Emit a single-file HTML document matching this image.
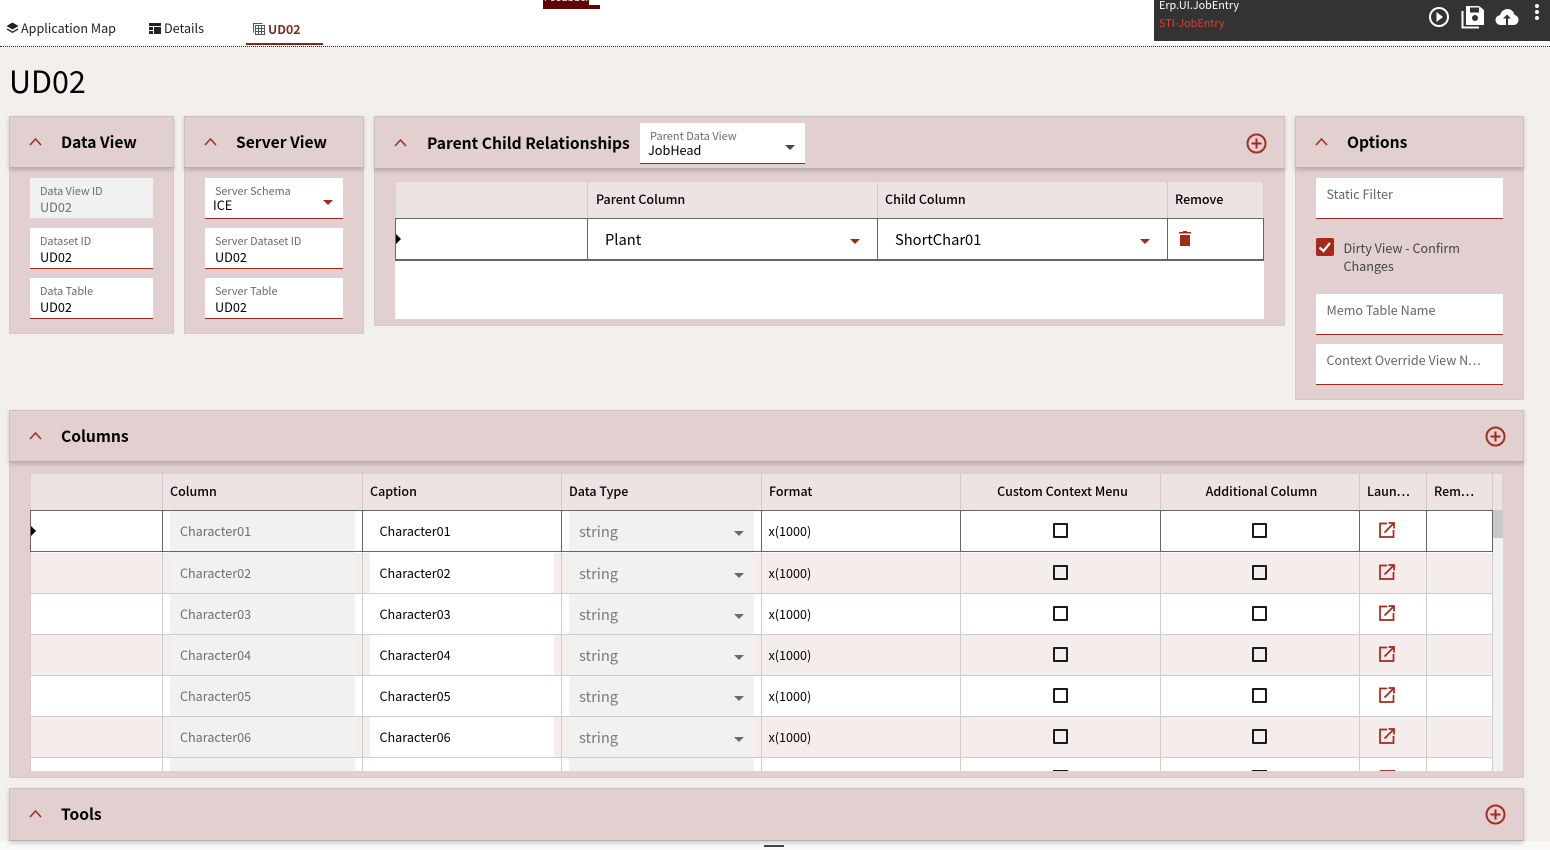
<!DOCTYPE html>
<html><head><meta charset="utf-8"><title>UD02</title>
<style>
html,body{margin:0;padding:0;width:1550px;height:850px;overflow:hidden;background:#f3efed}
body{position:relative;font-family:"Noto Sans CJK JP","Liberation Sans",sans-serif;color:#000}
div,svg{position:absolute;box-sizing:border-box}
.t{white-space:nowrap;line-height:20px;height:20px}
.p{background:#e2d0d0;border:1px solid #ccc}
.h{background:#e2d0d0;border:1px solid #c9c2c2;border-bottom:1px solid #b9adad;box-shadow:0 2px 4px rgba(0,0,0,.18)}
.ht{font-size:15.6px;font-weight:700;color:#000}
.f{background:#fff;border-bottom:1px solid #a5281b;height:41px}
.fd{background:#f1f1f1;height:40px}
.l{font-size:10.8px;color:#6b6b6b}
.v{font-size:12.7px;color:#000}
.th{font-size:12.5px;font-weight:500;color:#000}
.cap{font-size:12.6px}
.g{color:#6f6f6f}
.vl{width:1px;background:#cfcccc}
.hl{height:1px;background:#cfcccc}
.d{width:1px;background:#666}
.cb{width:15px;height:15px;border:2px solid #1a1a1a;border-radius:1px}
.tri{width:0;height:0;border-left:5px solid transparent;border-right:5px solid transparent;border-top:5px solid #6a6a6a}
.trr{width:0;height:0;border-left:5px solid transparent;border-right:5px solid transparent;border-top:5px solid #a5281b}
.str{font-size:14.7px;color:#7a7a7a}
.dots{letter-spacing:1px}
</style></head><body>

<!-- top bar -->
<div style="left:0;top:0;width:1550px;height:45px;background:#fff"></div>
<div style="left:0;top:46px;width:1550px;height:0;border-top:1px dotted #333"></div>
<svg style="left:6px;top:22px" width="13" height="12" viewBox="0 0 13 12"><path d="M6.500 0.500L12.500 4L6.500 7.500L0.500 4Z" fill="#222"/><path d="M1.500 6.500L6.500 9.500L11.500 6.500L12.500 7.500L6.500 11L0.500 7.500Z" fill="#222"/></svg>
<div class="t" style="left:21px;top:17.500px;font-size:12.600px;color:#222">Application Map</div>
<svg style="left:149px;top:23px" width="12" height="11" viewBox="0 0 12 11"><path d="M0 0H12V3H0ZM0 4H4V7H0ZM0 8H4V11H0ZM5 4H12V11H5Z" fill="#222"/></svg>
<div class="t" style="left:164px;top:17.500px;font-size:12.600px;color:#222">Details</div>
<svg style="left:253px;top:23px" width="12" height="12" viewBox="0 0 12 12" fill="none" stroke="#555"><path d="M.5 9.500V.5H9.500M2.500 2.500H11.500V11.500H2.500ZM2.500 5.500H11.500M2.500 8.500H11.500M5.500 2.500V11.500M8.500 2.500V11.500"/></svg>
<div class="t" style="left:268px;top:18.500px;font-size:12.300px;font-weight:700;color:#7c2b22">UD02</div>
<div style="left:246px;top:43px;width:77px;height:2px;background:#7c2b22"></div>

<div style="left:543px;top:0;width:57px;height:9px;background:#5f0505;overflow:hidden">
<div class="t" style="left:1px;top:-12px;font-size:10.500px;color:#fff">Feedback</div>
<div style="left:46px;top:0;width:11px;height:5px;background:#fff"></div></div>

<div style="left:1154px;top:0;width:396px;height:41px;background:#333"></div>
<div class="t" style="left:1159px;top:-5px;font-size:10.800px;color:#fff">Erp.UI.JobEntry</div>
<div class="t" style="left:1159px;top:13px;font-size:10.800px;color:#e23c2c">STI-JobEntry</div>
<svg style="left:1428px;top:6px" width="22" height="22" viewBox="0 0 22 22"><circle cx="11" cy="11" r="9" fill="none" stroke="#fff" stroke-width="2"/><path d="M8.500 6L15 11L8.500 16Z" fill="#fff"/></svg>
<svg style="left:1461px;top:5px" width="24" height="24" viewBox="0 0 24 24"><path d="M1.500 6V22.500H18" fill="none" stroke="#fff" stroke-width="2"/><path d="M5 1H18L23 5V20H5Z" fill="#fff"/><rect x="9" y="2.500" width="9" height="5" fill="#333"/><circle cx="14" cy="13" r="3" fill="#333"/></svg>
<svg style="left:1495px;top:6px" width="24" height="20" viewBox="0 0 24 20"><path d="M6 19C2.500 19 .5 16.500 .5 14C.5 11.500 2.500 9.500 5 9.300C6 5.500 9 3 12.500 3C16 3 19 5.500 19.500 9C22 9.300 23.500 11.500 23.500 14C23.500 16.500 21.500 19 18.500 19Z" fill="#fff"/><path d="M12 8.500L16 12.500H13V19H11V12.500H8Z" fill="#333"/></svg>
<div style="left:1534.500px;top:4px;width:4px;height:4px;border-radius:50%;background:#fff"></div>
<div style="left:1534.500px;top:10px;width:4px;height:4px;border-radius:50%;background:#fff"></div>
<div style="left:1534.500px;top:16px;width:4px;height:4px;border-radius:50%;background:#fff"></div>

<div class="t" style="left:9px;top:70px;font-size:30.500px;height:20px">UD02</div>

<!-- Data View -->
<div class="p" style="left:9px;top:116px;width:165px;height:218px"></div>
<div class="h" style="left:9px;top:116px;width:165px;height:52px"></div>
<svg style="left:28.500px;top:137px" width="13" height="9" viewBox="0 0 13 9"><path d="M1 8L6.500 2L12 8" fill="none" stroke="#a03020" stroke-width="1.600"/></svg>
<div class="t ht" style="left:61px;top:132px">Data View</div>
<div class="fd" style="left:30px;top:178px;width:123px"></div>
<div class="t l" style="left:40px;top:181px">Data View ID</div>
<div class="t v g" style="left:40px;top:197px">UD02</div>
<div class="f" style="left:30px;top:228px;width:123px"></div>
<div class="t l" style="left:40px;top:231px">Dataset ID</div>
<div class="t v" style="left:40px;top:247px">UD02</div>
<div class="f" style="left:30px;top:278px;width:123px"></div>
<div class="t l" style="left:40px;top:281px">Data Table</div>
<div class="t v" style="left:40px;top:297px">UD02</div>

<!-- Server View -->
<div class="p" style="left:184px;top:116px;width:180px;height:218px"></div>
<div class="h" style="left:184px;top:116px;width:180px;height:52px"></div>
<svg style="left:203.500px;top:137px" width="13" height="9" viewBox="0 0 13 9"><path d="M1 8L6.500 2L12 8" fill="none" stroke="#a03020" stroke-width="1.600"/></svg>
<div class="t ht" style="left:236px;top:132px">Server View</div>
<div class="f" style="left:205px;top:178px;width:138px"></div>
<div class="t l" style="left:215px;top:181px">Server Schema</div>
<div class="t v" style="left:213px;top:195px">ICE</div>
<div class="trr" style="left:323px;top:200px"></div>
<div class="f" style="left:205px;top:228px;width:138px"></div>
<div class="t l" style="left:215px;top:231px">Server Dataset ID</div>
<div class="t v" style="left:215px;top:247px">UD02</div>
<div class="f" style="left:205px;top:278px;width:138px"></div>
<div class="t l" style="left:215px;top:281px">Server Table</div>
<div class="t v" style="left:215px;top:297px">UD02</div>

<!-- Parent Child -->
<div class="p" style="left:374px;top:116px;width:911px;height:210px"></div>
<div class="h" style="left:374px;top:116px;width:911px;height:53px"></div>
<svg style="left:393.500px;top:138px" width="13" height="9" viewBox="0 0 13 9"><path d="M1 8L6.500 2L12 8" fill="none" stroke="#a03020" stroke-width="1.600"/></svg>
<div class="t ht" style="left:427px;top:133px">Parent Child Relationships</div>
<div class="f" style="left:640px;top:123px;width:165px"></div>
<div class="t l" style="left:650px;top:126px;font-size:11px">Parent Data View</div>
<div class="t v" style="left:648px;top:140px">JobHead</div>
<div class="tri" style="left:785px;top:145px;border-top-color:#444"></div>
<svg style="left:1245.500px;top:133px" width="21" height="21" viewBox="0 0 21 21"><circle cx="10.500" cy="10.500" r="9" fill="none" stroke="#a03020" stroke-width="2"/><path d="M10.500 5.500V15.500M5.500 10.500H15.500" stroke="#a5281b" stroke-width="2"/></svg>

<div style="left:395px;top:181px;width:869px;height:138px;background:#fff"></div>
<div style="left:395px;top:181px;width:869px;height:37px;background:#ede3e3;border:1px solid #d6d0d0;border-bottom:0"></div>
<div class="vl" style="left:587px;top:181px;height:37px"></div>
<div class="vl" style="left:877px;top:181px;height:37px"></div>
<div class="vl" style="left:1167px;top:181px;height:37px"></div>
<div class="t th" style="left:596px;top:189px">Parent Column</div>
<div class="t th" style="left:885px;top:189px">Child Column</div>
<div class="t th" style="left:1175px;top:189px">Remove</div>
<div style="left:395px;top:218px;width:869px;height:43px;border:1px solid #666;border-bottom:2px solid #666"></div>
<div class="d" style="left:587px;top:218px;height:43px"></div>
<div class="d" style="left:877px;top:218px;height:43px"></div>
<div class="d" style="left:1167px;top:218px;height:43px"></div>
<div style="left:396px;top:234px;width:0;height:0;border-top:5px solid transparent;border-bottom:5px solid transparent;border-left:5px solid #000"></div>
<div class="t" style="left:605px;top:230px;font-size:14.700px">Plant</div>
<div class="t" style="left:895px;top:230px;font-size:14.700px">ShortChar01</div>
<div class="trr" style="left:850px;top:239px"></div>
<div class="trr" style="left:1140px;top:239px"></div>
<svg style="left:1179px;top:231px" width="12" height="15" viewBox="0 0 12 15"><path d="M4 0H8V1H12V2.500H0V1H4Z" fill="#a5281b"/><path d="M1 4H11V15H1Z" fill="#a5281b"/></svg>

<!-- Options -->
<div class="p" style="left:1295px;top:116px;width:229px;height:284px"></div>
<div class="h" style="left:1295px;top:116px;width:229px;height:52px"></div>
<svg style="left:1314.500px;top:137px" width="13" height="9" viewBox="0 0 13 9"><path d="M1 8L6.500 2L12 8" fill="none" stroke="#a03020" stroke-width="1.600"/></svg>
<div class="t ht" style="left:1347px;top:132px">Options</div>
<div class="f" style="left:1316px;top:178px;width:187px"></div>
<div class="t" style="left:1326.500px;top:184px;font-size:12.600px;color:#666">Static Filter</div>
<svg style="left:1316px;top:238px" width="18" height="18" viewBox="0 0 18 18"><rect width="18" height="18" rx="2" fill="#a5281b"/><path d="M3.500 9.500L7.500 13L14 5" fill="none" stroke="#fff" stroke-width="2.200"/></svg>
<div class="t" style="left:1343.500px;top:238px;font-size:12.600px;color:#444">Dirty View - Confirm</div>
<div class="t" style="left:1343.500px;top:256px;font-size:12.600px;color:#444">Changes</div>
<div class="f" style="left:1316px;top:294px;width:187px"></div>
<div class="t" style="left:1326.500px;top:300px;font-size:12.600px;color:#666">Memo Table Name</div>
<div class="f" style="left:1316px;top:344px;width:187px"></div>
<div class="t" style="left:1326.500px;top:350px;font-size:12.600px;color:#666">Context Override View N<span class="dots">...</span></div>

<!-- Columns -->
<div class="p" style="left:9px;top:410px;width:1515px;height:368px"></div>
<div class="h" style="left:9px;top:410px;width:1515px;height:52px"></div>
<svg style="left:28.500px;top:431px" width="13" height="9" viewBox="0 0 13 9"><path d="M1 8L6.500 2L12 8" fill="none" stroke="#a03020" stroke-width="1.600"/></svg>
<div class="t ht" style="left:61px;top:426px">Columns</div>
<svg style="left:1484.500px;top:425.500px" width="21" height="21" viewBox="0 0 21 21"><circle cx="10.500" cy="10.500" r="9" fill="none" stroke="#a03020" stroke-width="2"/><path d="M10.500 5.500V15.500M5.500 10.500H15.500" stroke="#a5281b" stroke-width="2"/></svg>

<div style="left:30px;top:473px;width:1473px;height:298px;background:#fff;overflow:hidden"></div>
<div style="left:30px;top:473px;width:1473px;height:37px;background:#ede3e3;border:1px solid #d6d0d0;border-bottom:0"></div>
<div style="left:1493px;top:510px;width:10px;height:261px;background:#f1f1f1"></div>
<div style="left:1493px;top:510px;width:10px;height:28px;background:#c8c8c8"></div>
<!-- pink rows -->
<div style="left:31px;top:553px;width:1462px;height:40px;background:#f5ecec"></div>
<div style="left:31px;top:635px;width:1462px;height:40px;background:#f5ecec"></div>
<div style="left:31px;top:717px;width:1462px;height:40px;background:#f5ecec"></div>
<!-- column fills -->
<div style="left:170px;top:510px;width:185px;height:261px;background:#f1f1f1"></div>
<div style="left:569px;top:510px;width:185px;height:261px;background:#f1f1f1"></div>
<div style="left:370px;top:553px;width:184px;height:40px;background:#fff"></div>
<div style="left:370px;top:635px;width:184px;height:40px;background:#fff"></div>
<div style="left:370px;top:717px;width:184px;height:40px;background:#fff"></div>
<!-- grid -->
<div class="hl" style="left:31px;top:593px;width:1462px"></div>
<div class="hl" style="left:31px;top:634px;width:1462px"></div>
<div class="hl" style="left:31px;top:675px;width:1462px"></div>
<div class="hl" style="left:31px;top:716px;width:1462px"></div>
<div class="hl" style="left:31px;top:757px;width:1462px"></div>
<div class="vl" style="left:30px;top:510px;height:261px"></div>
<div class="vl" style="left:162px;top:473px;height:298px"></div>
<div class="vl" style="left:362px;top:473px;height:298px"></div>
<div class="vl" style="left:561px;top:473px;height:298px"></div>
<div class="vl" style="left:761px;top:473px;height:298px"></div>
<div class="vl" style="left:960px;top:473px;height:298px"></div>
<div class="vl" style="left:1160px;top:473px;height:298px"></div>
<div class="vl" style="left:1359px;top:473px;height:298px"></div>
<div class="vl" style="left:1426px;top:473px;height:298px"></div>
<div class="vl" style="left:1492px;top:473px;height:298px"></div>
<!-- selected row -->
<div style="left:30px;top:510px;width:1463px;height:42px;border:1px solid #666"></div>
<div class="d" style="left:162px;top:510px;height:42px"></div>
<div class="d" style="left:362px;top:510px;height:42px"></div>
<div class="d" style="left:561px;top:510px;height:42px"></div>
<div class="d" style="left:761px;top:510px;height:42px"></div>
<div class="d" style="left:960px;top:510px;height:42px"></div>
<div class="d" style="left:1160px;top:510px;height:42px"></div>
<div class="d" style="left:1359px;top:510px;height:42px"></div>
<div class="d" style="left:1426px;top:510px;height:42px"></div>
<div style="left:31px;top:526px;width:0;height:0;border-top:5px solid transparent;border-bottom:5px solid transparent;border-left:5px solid #000"></div>
<!-- header text -->
<div class="t th" style="left:170px;top:481px">Column</div>
<div class="t th" style="left:370px;top:481px">Caption</div>
<div class="t th" style="left:569px;top:481px">Data Type</div>
<div class="t th" style="left:769px;top:481px">Format</div>
<div class="t th" style="left:963px;top:481px;width:199px;text-align:center">Custom Context Menu</div>
<div class="t th" style="left:1162px;top:481px;width:199px;text-align:center">Additional Column</div>
<div class="t th" style="left:1367px;top:481px">Laun<span class="dots">...</span></div>
<div class="t th" style="left:1434px;top:481px">Rem<span class="dots">...</span></div>

<!-- rows text -->
<div class="t cap g" style="left:180px;top:521px">Character01</div><div class="t cap" style="left:379.500px;top:521px">Character01</div><div class="t str" style="left:579px;top:522px">string</div><div class="tri" style="left:734px;top:531px"></div><div class="t cap" style="left:768.500px;top:521px">x(1000)</div><div class="cb" style="left:1053px;top:523px"></div><div class="cb" style="left:1252px;top:523px"></div>
<svg style="left:1379px;top:522px" width="16" height="16" viewBox="0 0 16 16" fill="none" stroke="#a5281b" stroke-width="1.700"><path d="M8 1.500H1V15H14.500V8M5.500 10.500L14 2M9.500 1H15V6.500"/></svg>

<div class="t cap g" style="left:180px;top:563px">Character02</div><div class="t cap" style="left:379.500px;top:563px">Character02</div><div class="t str" style="left:579px;top:564px">string</div><div class="tri" style="left:734px;top:573px"></div><div class="t cap" style="left:768.500px;top:563px">x(1000)</div><div class="cb" style="left:1053px;top:565px"></div><div class="cb" style="left:1252px;top:565px"></div>
<svg style="left:1379px;top:564px" width="16" height="16" viewBox="0 0 16 16" fill="none" stroke="#a5281b" stroke-width="1.700"><path d="M8 1.500H1V15H14.500V8M5.500 10.500L14 2M9.500 1H15V6.500"/></svg>

<div class="t cap g" style="left:180px;top:604px">Character03</div><div class="t cap" style="left:379.500px;top:604px">Character03</div><div class="t str" style="left:579px;top:605px">string</div><div class="tri" style="left:734px;top:614px"></div><div class="t cap" style="left:768.500px;top:604px">x(1000)</div><div class="cb" style="left:1053px;top:606px"></div><div class="cb" style="left:1252px;top:606px"></div>
<svg style="left:1379px;top:605px" width="16" height="16" viewBox="0 0 16 16" fill="none" stroke="#a5281b" stroke-width="1.700"><path d="M8 1.500H1V15H14.500V8M5.500 10.500L14 2M9.500 1H15V6.500"/></svg>

<div class="t cap g" style="left:180px;top:645px">Character04</div><div class="t cap" style="left:379.500px;top:645px">Character04</div><div class="t str" style="left:579px;top:646px">string</div><div class="tri" style="left:734px;top:655px"></div><div class="t cap" style="left:768.500px;top:645px">x(1000)</div><div class="cb" style="left:1053px;top:647px"></div><div class="cb" style="left:1252px;top:647px"></div>
<svg style="left:1379px;top:646px" width="16" height="16" viewBox="0 0 16 16" fill="none" stroke="#a5281b" stroke-width="1.700"><path d="M8 1.500H1V15H14.500V8M5.500 10.500L14 2M9.500 1H15V6.500"/></svg>

<div class="t cap g" style="left:180px;top:686px">Character05</div><div class="t cap" style="left:379.500px;top:686px">Character05</div><div class="t str" style="left:579px;top:687px">string</div><div class="tri" style="left:734px;top:696px"></div><div class="t cap" style="left:768.500px;top:686px">x(1000)</div><div class="cb" style="left:1053px;top:688px"></div><div class="cb" style="left:1252px;top:688px"></div>
<svg style="left:1379px;top:687px" width="16" height="16" viewBox="0 0 16 16" fill="none" stroke="#a5281b" stroke-width="1.700"><path d="M8 1.500H1V15H14.500V8M5.500 10.500L14 2M9.500 1H15V6.500"/></svg>

<div class="t cap g" style="left:180px;top:727px">Character06</div><div class="t cap" style="left:379.500px;top:727px">Character06</div><div class="t str" style="left:579px;top:728px">string</div><div class="tri" style="left:734px;top:737px"></div><div class="t cap" style="left:768.500px;top:727px">x(1000)</div><div class="cb" style="left:1053px;top:729px"></div><div class="cb" style="left:1252px;top:729px"></div>
<svg style="left:1379px;top:728px" width="16" height="16" viewBox="0 0 16 16" fill="none" stroke="#a5281b" stroke-width="1.700"><path d="M8 1.500H1V15H14.500V8M5.500 10.500L14 2M9.500 1H15V6.500"/></svg>

<!-- clipped row 7 -->
<div style="left:1053px;top:770px;width:15px;height:1px;background:#1a1a1a"></div>
<div style="left:1252px;top:770px;width:15px;height:1px;background:#1a1a1a"></div>
<div style="left:1380px;top:770px;width:15px;height:1px;background:#a5392c"></div>

<!-- bottom band, Tools -->
<div style="left:0;top:841px;width:1550px;height:9px;background:#f9f9f9"></div>
<div class="h" style="left:9px;top:788px;width:1515px;height:53px"></div>
<svg style="left:28.500px;top:809px" width="13" height="9" viewBox="0 0 13 9"><path d="M1 8L6.500 2L12 8" fill="none" stroke="#a03020" stroke-width="1.600"/></svg>
<div class="t ht" style="left:61px;top:804px">Tools</div>
<svg style="left:1484.500px;top:803.500px" width="21" height="21" viewBox="0 0 21 21"><circle cx="10.500" cy="10.500" r="9" fill="none" stroke="#a03020" stroke-width="2"/><path d="M10.500 5.500V15.500M5.500 10.500H15.500" stroke="#a5281b" stroke-width="2"/></svg>
<div style="left:764px;top:845px;width:20px;height:2px;background:#444"></div>
</body></html>
